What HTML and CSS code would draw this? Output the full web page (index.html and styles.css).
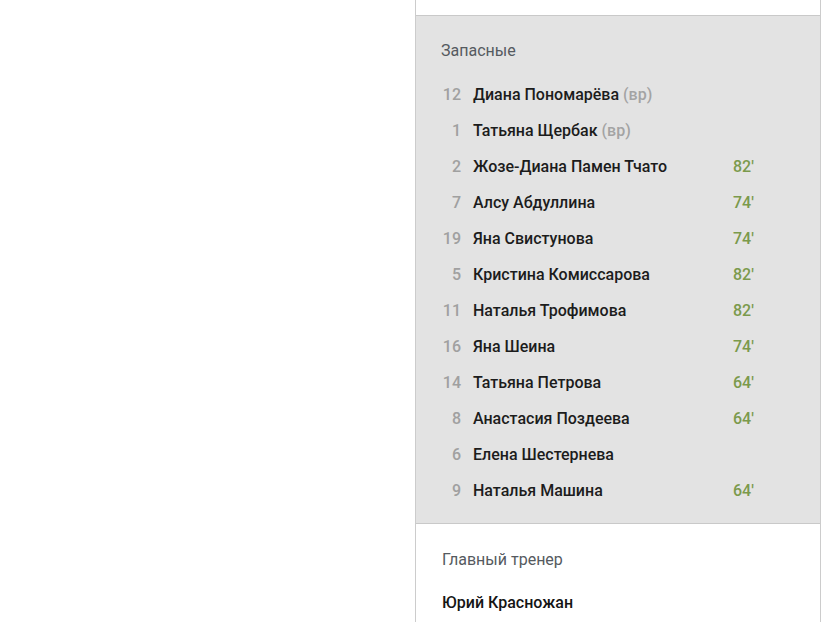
FILE: index.html
```html
<!DOCTYPE html>
<html lang="ru">
<head>
<meta charset="utf-8">
<link rel="stylesheet" href="styles.css">
</head>
<body>
<div class="panel">
  <div class="top"></div>
  <section class="subs">
    <div class="title">Запасные</div>
    <div class="list">
      <div class="row"><span class="num">12</span><span class="name">Диана Пономарёва <span class="gk">(вр)</span></span><span class="min"></span></div>
      <div class="row"><span class="num">1</span><span class="name">Татьяна Щербак <span class="gk">(вр)</span></span><span class="min"></span></div>
      <div class="row"><span class="num">2</span><span class="name">Жозе-Диана Памен Тчато</span><span class="min">82'</span></div>
      <div class="row"><span class="num">7</span><span class="name">Алсу Абдуллина</span><span class="min">74'</span></div>
      <div class="row"><span class="num">19</span><span class="name">Яна Свистунова</span><span class="min">74'</span></div>
      <div class="row"><span class="num">5</span><span class="name">Кристина Комиссарова</span><span class="min">82'</span></div>
      <div class="row"><span class="num">11</span><span class="name">Наталья Трофимова</span><span class="min">82'</span></div>
      <div class="row"><span class="num">16</span><span class="name">Яна Шеина</span><span class="min">74'</span></div>
      <div class="row"><span class="num">14</span><span class="name">Татьяна Петрова</span><span class="min">64'</span></div>
      <div class="row"><span class="num">8</span><span class="name">Анастасия Поздеева</span><span class="min">64'</span></div>
      <div class="row"><span class="num">6</span><span class="name">Елена Шестернева</span><span class="min"></span></div>
      <div class="row"><span class="num">9</span><span class="name">Наталья Машина</span><span class="min">64'</span></div>
    </div>
  </section>
  <section class="coach">
    <div class="title">Главный тренер</div>
    <div class="coach-name">Юрий Красножан</div>
  </section>
</div>
</body>
</html>
```

FILE: styles.css
```css
html, body {
  margin: 0;
  padding: 0;
  background: #ffffff;
}
body {
  font-family: Roboto, "Noto Sans", sans-serif;
  font-size: 16px;
  color: #1f1f1f;
}
.panel {
  margin-left: 415px;
  width: 404px;
  border-left: 1px solid #cccccc;
  border-right: 1px solid #cccccc;
  min-height: 622px;
}
.top {
  height: 15px;
}
.subs {
  background: #e3e3e3;
  border-top: 1px solid #c9c9c9;
  border-bottom: 1px solid #c9c9c9;
  padding: 25px 0 14px 25px;
}
.title {
  line-height: 20px;
  color: #555a60;
  font-weight: 400;
}
.list {
  margin-top: 16px;
}
.row {
  display: grid;
  grid-template-columns: 20px 248px auto;
  column-gap: 12px;
  height: 36px;
  align-items: center;
  line-height: 20px;
}
.num {
  text-align: right;
  color: #a0a0a0;
  font-weight: 500;
}
.name {
  font-weight: 500;
  color: #1c1c1c;
}
.gk {
  color: #a3a3a3;
  font-weight: 500;
}
.min {
  color: #7b9a4c;
  font-weight: 500;
}
.coach {
  padding: 26px 0 0 26px;
}
.coach-name {
  margin-top: 23px;
  line-height: 20px;
  font-weight: 500;
  color: #151515;
}
```
